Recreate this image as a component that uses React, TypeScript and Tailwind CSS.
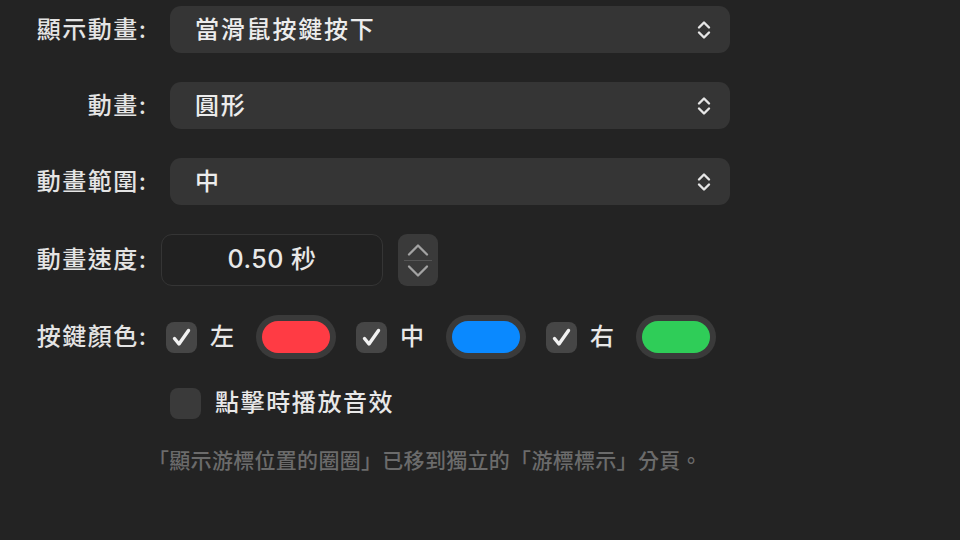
import { ReactNode } from "react";

const font = { fontFamily: 'Inter, "Noto Sans CJK TC", sans-serif' };

// Up/down chevrons drawn on the right side of popup buttons
const PopupArrows = () => (
  <svg width="16" height="24" viewBox="0 0 16 24" fill="none">
    <path d="M3 9.5 L8 4.5 L13 9.5" stroke="#e6e6e6" strokeWidth="2.4" strokeLinecap="round" strokeLinejoin="round" />
    <path d="M3 14.5 L8 19.5 L13 14.5" stroke="#e6e6e6" strokeWidth="2.4" strokeLinecap="round" strokeLinejoin="round" />
  </svg>
);

const Label = ({ children }: { children: ReactNode }) => (
  <div className="-mr-[1.5px] w-[147.5px] shrink-0 text-right text-[24px] font-medium tracking-[1.5px] text-[#e4e4e4]">
    {children}
  </div>
);

const Popup = ({ value }: { value: string }) => (
  <div className="ml-[24px] flex h-full w-[560px] items-center justify-between rounded-[11px] bg-[#353535] pl-[25px] pr-[18px]">
    <span className="text-[24px] font-medium tracking-[1.8px] text-[#ececec]">{value}</span>
    <PopupArrows />
  </div>
);

const Check = ({ checked }: { checked: boolean }) => (
  <div
    className={`flex h-[31px] w-[31px] shrink-0 items-center justify-center rounded-[8px] ${
      checked ? "bg-[#464646]" : "bg-[#3a3a3a]"
    }`}
  >
    {checked && (
      <svg width="31" height="31" viewBox="0 0 31 31" fill="none">
        <path d="M8.5 16.5 L13 22 L22.5 8.5" stroke="#f2f2f2" strokeWidth="3.4" strokeLinecap="round" strokeLinejoin="round" />
      </svg>
    )}
  </div>
);

const ColorWell = ({ color }: { color: string }) => (
  <div className="flex h-[44px] w-[80px] shrink-0 items-center justify-center rounded-full bg-[#3a3a3a]">
    <div className="h-[32px] w-[68px] rounded-full" style={{ backgroundColor: color }} />
  </div>
);

const buttons = [
  { label: "左", color: "#ff3b44" },
  { label: "中", color: "#0a89ff" },
  { label: "右", color: "#2fcd58" },
];

export default function App() {
  return (
    <div className="h-screen w-full overflow-hidden bg-[#232323] pt-[6px]" style={font}>
      <div className="flex flex-col gap-[29px]">
        <div className="flex h-[47px] items-center">
          <Label>顯示動畫:</Label>
          <Popup value="當滑鼠按鍵按下" />
        </div>

        <div className="flex h-[47px] items-center">
          <Label>動畫:</Label>
          <Popup value="圓形" />
        </div>

        <div className="flex h-[47px] items-center">
          <Label>動畫範圍:</Label>
          <Popup value="中" />
        </div>

        {/* Speed field with stepper */}
        <div className="flex h-[52px] items-center">
          <Label>動畫速度:</Label>
          <div className="ml-[15px] flex h-[52px] w-[222px] items-center justify-center rounded-[11px] border border-[#353535] bg-[#212121]">
            <span className="text-[25px] font-medium tracking-[0.5px] text-[#e8e8e8]">0.50 秒</span>
          </div>
          <div className="ml-[15px] flex h-[52px] w-[40px] flex-col items-center justify-center rounded-[9px] bg-[#3a3a3a]">
            <svg width="22" height="14" viewBox="0 0 22 14" fill="none">
              <path d="M2 11.5 L11 2.5 L20 11.5" stroke="#a3a3a3" strokeWidth="2.3" strokeLinecap="round" strokeLinejoin="round" />
            </svg>
            <div className="my-[3px] h-px w-[28px] bg-[#555555]" />
            <svg width="22" height="14" viewBox="0 0 22 14" fill="none">
              <path d="M2 2.5 L11 11.5 L20 2.5" stroke="#a3a3a3" strokeWidth="2.3" strokeLinecap="round" strokeLinejoin="round" />
            </svg>
          </div>
        </div>

        {/* Mouse button colours */}
        <div className="flex h-[44px] items-center">
          <Label>按鍵顏色:</Label>
          <div className="ml-[20px] flex items-center gap-[20px]">
            {buttons.map((b) => (
              <div key={b.label} className="flex items-center">
                <Check checked />
                <span className="ml-[13px] mr-[22px] text-[24px] font-medium text-[#e8e8e8]">{b.label}</span>
                <ColorWell color={b.color} />
              </div>
            ))}
          </div>
        </div>

        <div className="flex h-[30px] items-center pl-[170px]">
          <Check checked={false} />
          <span className="ml-[14px] text-[24px] font-medium tracking-[1.6px] text-[#e8e8e8]">點擊時播放音效</span>
        </div>

        <div className="flex h-[28px] items-center pl-[148px]">
          <span className="text-[21px] font-medium tracking-[0.3px] text-[#6b6b6b]">
            「顯示游標位置的圈圈」已移到獨立的「游標標示」分頁。
          </span>
        </div>
      </div>
    </div>
  );
}
